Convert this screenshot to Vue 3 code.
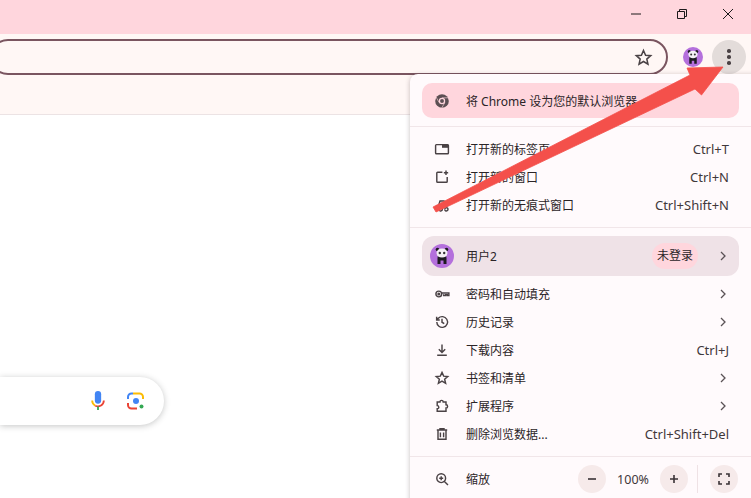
<script setup>
const topRows = [
  { id: 'tab', label: '打开新的标签页', key: 'Ctrl+T' },
  { id: 'win', label: '打开新的窗口', key: 'Ctrl+N' },
  { id: 'inc', label: '打开新的无痕式窗口', key: 'Ctrl+Shift+N' },
]

const lowerRows = [
  { id: 'pass', label: '密码和自动填充', more: true },
  { id: 'hist', label: '历史记录', more: true },
  { id: 'down', label: '下载内容', key: 'Ctrl+J' },
  { id: 'star', label: '书签和清单', more: true },
  { id: 'ext', label: '扩展程序', more: true },
  { id: 'del', label: '删除浏览数据...', key: 'Ctrl+Shift+Del' },
]
</script>

<template>
  <div class="page">
    <div class="titlebar">
      <svg class="win-btn" viewBox="0 0 12 12"><path d="M1 6h10" /></svg>
      <svg class="win-btn" viewBox="0 0 12 12"><path d="M1.5 3.5h7v7h-7zM3.5 3.5v-2h7v7h-2" /></svg>
      <svg class="win-btn" viewBox="0 0 12 12"><path d="M1 1l10 10M11 1L1 11" /></svg>
    </div>

    <div class="toolbar">
      <div class="omnibox">
        <svg class="star" viewBox="0 0 20 20"><path d="M10 2.6l2.2 5 5.4.5-4.1 3.6 1.2 5.3L10 14.2 5.3 17l1.2-5.3-4.1-3.6 5.4-.5z" /></svg>
      </div>
      <svg class="avatar small" viewBox="0 0 24 24">
        <circle cx="12" cy="12" r="12" fill="#b470dc" />
        <circle cx="7.500" cy="5.500" r="1.800" fill="#1d1a20" />
        <circle cx="16.500" cy="5.500" r="1.800" fill="#1d1a20" />
        <path d="M7.500 20v-6a4.500 4.500 0 0 1 9 0v6h-3v-3.500h-3V20z" fill="#1d1a20" />
        <ellipse cx="12" cy="9" rx="5.500" ry="4.500" fill="#f4f1f4" />
        <circle cx="9.800" cy="9" r="1.200" fill="#333" />
        <circle cx="14.200" cy="9" r="1.200" fill="#333" />
      </svg>
      <div class="dots-btn">
        <i></i><i></i><i></i>
      </div>
    </div>

    <div class="bookmarks"></div>

    <div class="content">
      <div class="searchbox">
        <svg class="mic" viewBox="0 0 20 24">
          <rect x="6.500" y="1" width="7" height="14" rx="3.500" fill="#4285f4" />
          <path d="M3.500 11.500a6.500 6.500 0 0 0 3.500 5.700" fill="none" stroke="#fbbc04" stroke-width="2" />
          <path d="M7 17.200a6.500 6.500 0 0 0 9.500-5.700" fill="none" stroke="#ea4335" stroke-width="2" />
          <rect x="9" y="18" width="2" height="4" fill="#34a853" />
        </svg>
        <svg class="lens" viewBox="0 0 20 20">
          <path d="M2 8V6a3.500 3.500 0 0 1 3.500-3.500H7" fill="none" stroke="#4285f4" stroke-width="2" />
          <path d="M7 2.500h6.500A3.500 3.500 0 0 1 17 6v2" fill="none" stroke="#fbbc04" stroke-width="2" />
          <path d="M2 12v2a3.500 3.500 0 0 0 3.500 3.500H11" fill="none" stroke="#ea4335" stroke-width="2" />
          <circle cx="10" cy="10" r="3" fill="#4285f4" />
          <circle cx="15.500" cy="15.500" r="2" fill="#34a853" />
        </svg>
      </div>
    </div>

    <div class="menu">
      <div class="banner">
        <svg class="icon" viewBox="0 0 20 20">
          <circle cx="10" cy="10" r="8.500" fill="#5c4f53" />
          <circle cx="10" cy="10" r="4" fill="#ffd6dd" />
          <circle cx="10" cy="10" r="2.400" fill="#5c4f53" />
          <path d="M10 6h8M6.500 12l-4-7M13.500 12l-4 7" stroke="#ffd6dd" stroke-width=".8" fill="none" />
        </svg>
        <span class="label">将 Chrome 设为您的默认浏览器</span>
      </div>
      <div class="divider"></div>

      <div class="group">
        <div v-for="row in topRows" :key="row.id" class="row">
          <svg class="icon" viewBox="0 0 20 20">
            <g v-if="row.id === 'tab'">
              <rect x="2" y="4.500" width="16" height="11.500" rx="1" fill="none" stroke="#4a4245" stroke-width="1.800" />
              <rect x="10" y="4.500" width="8" height="4" fill="#4a4245" />
            </g>
            <path v-else-if="row.id === 'win'" d="M10.500 4H4.500a1 1 0 0 0-1 1v10.500a1 1 0 0 0 1 1h11a1 1 0 0 0 1-1V10M15 2v5.500M12.300 4.700h5.400" fill="none" stroke="#4a4245" stroke-width="1.800" />
            <path v-else d="M3 11h14M6 10l1.500-5h5L14 10M6.500 15.500a2 2 0 1 0 0-.1M13.500 15.500a2 2 0 1 0 0-.1" fill="none" stroke="#4a4245" stroke-width="1.800" />
          </svg>
          <span class="label">{{ row.label }}</span>
          <span class="shortcut">{{ row.key }}</span>
        </div>
      </div>
      <div class="divider"></div>

      <div class="profile">
        <svg class="avatar" viewBox="0 0 24 24">
          <circle cx="12" cy="12" r="12" fill="#b470dc" />
          <circle cx="7.500" cy="5.500" r="1.800" fill="#1d1a20" />
          <circle cx="16.500" cy="5.500" r="1.800" fill="#1d1a20" />
          <path d="M7.500 20v-6a4.500 4.500 0 0 1 9 0v6h-3v-3.500h-3V20z" fill="#1d1a20" />
          <ellipse cx="12" cy="9" rx="5.500" ry="4.500" fill="#f4f1f4" />
          <circle cx="9.800" cy="9" r="1.200" fill="#333" />
          <circle cx="14.200" cy="9" r="1.200" fill="#333" />
        </svg>
        <span class="label">用户2</span>
        <span class="badge">未登录</span>
        <svg class="chevron" viewBox="0 0 6 10"><path d="M1 1l4 4-4 4" /></svg>
      </div>

      <div class="group lower">
        <div v-for="row in lowerRows" :key="row.id" class="row">
          <svg class="icon" viewBox="0 0 20 20">
            <g v-if="row.id === 'pass'" fill="none" stroke="#4a4245" stroke-width="1.800">
              <circle cx="6" cy="10" r="3.600" />
              <circle cx="6" cy="10" r="1" />
              <path d="M9.600 8.800h9v3h-2v-1h-2v1h-2.500v-1.500" />
            </g>
            <path v-else-if="row.id === 'hist'" d="M3.500 10a6.700 6.700 0 1 0 1.900-4.700L3.500 7.200M3.300 3.500v3.900h3.900M10 6v4.300l2.800 1.700" fill="none" stroke="#4a4245" stroke-width="1.800" />
            <path v-else-if="row.id === 'down'" d="M10 3v9.500M6 9l4 4 4-4M4 16.500h12" fill="none" stroke="#4a4245" stroke-width="1.800" />
            <path v-else-if="row.id === 'star'" d="M10 3l2.100 4.700 5.100.5-3.900 3.400 1.200 5L10 13.900l-4.500 2.700 1.200-5-3.900-3.400 5.100-.5z" fill="none" stroke="#4a4245" stroke-width="1.800" />
            <path v-else-if="row.id === 'ext'" d="M4 5h3.500a2 2 0 0 1 4 0H15v3.500a2 2 0 0 1 0 4V16.500H4v-3a2 2 0 0 0 0-4z" fill="none" stroke="#4a4245" stroke-width="1.800" />
            <path v-else d="M3.500 5h13M7.500 5V3.500h5V5M5 5v11.500h10V5M8 8v6M12 8v6" fill="none" stroke="#4a4245" stroke-width="1.800" />
          </svg>
          <span class="label">{{ row.label }}</span>
          <span v-if="row.key" class="shortcut">{{ row.key }}</span>
          <svg v-if="row.more" class="chevron" viewBox="0 0 6 10"><path d="M1 1l4 4-4 4" /></svg>
        </div>
      </div>
      <div class="divider"></div>

      <div class="zoom-row">
        <svg class="icon" viewBox="0 0 20 20">
          <path d="M9 3.500a5.500 5.500 0 1 0 0 11 5.500 5.500 0 0 0 0-11ZM13 13l4.500 4.500M6.500 9h5M9 6.500v5" fill="none" stroke="#4a4245" stroke-width="1.800" />
        </svg>
        <span class="label">缩放</span>
        <div class="round"><svg viewBox="0 0 12 12"><path d="M2 6h8" /></svg></div>
        <span class="percent">100%</span>
        <div class="round"><svg viewBox="0 0 12 12"><path d="M2 6h8M6 2v8" /></svg></div>
        <div class="sep"></div>
        <div class="round"><svg viewBox="0 0 12 12"><path d="M1 4V1h3M8 1h3v3M11 8v3H8M4 11H1V8" /></svg></div>
      </div>
    </div>

    <svg class="arrow" viewBox="0 0 751 498">
      <path d="M433 207L690 75 687 68 723 67 701.500 95 695 89 436 212z" fill="#f4504b" stroke="#f4504b" stroke-width=".8" stroke-linejoin="round" />
    </svg>
  </div>
</template>

<style>
body {
  margin: 0;
  background: #fff;
}
</style>

<style scoped>
.page {
  position: relative;
  width: 751px;
  height: 498px;
  overflow: hidden;
  display: flex;
  flex-direction: column;
  font-family: "Noto Sans", "Noto Sans CJK SC", sans-serif;
  font-size: 12px;
  color: #2b2427;
}

.titlebar {
  height: 34px;
  background: #ffd6dd;
  display: flex;
  justify-content: flex-end;
  align-items: center;
  padding-right: 17px;
  gap: 34px;
  padding-bottom: 6px;
  box-sizing: border-box;
}

.win-btn {
  width: 12px;
  height: 12px;
  fill: none;
  stroke: #1c1a1b;
  stroke-width: 1;
}

.toolbar {
  height: 41px;
  background: #fff7f5;
  display: flex;
  align-items: center;
  padding-top: 5px;
  box-sizing: border-box;
}

.omnibox {
  flex: none;
  width: 678px;
  margin-left: -10px;
  height: 36px;
  box-sizing: border-box;
  border: 2px solid #7a5560;
  border-radius: 18px;
  background: #fff7f5;
  display: flex;
  align-items: center;
  justify-content: flex-end;
  padding-right: 13px;
}

.star {
  width: 19px;
  height: 19px;
  fill: none;
  stroke: #4a4245;
  stroke-width: 1.600;
}

.avatar {
  width: 24px;
  height: 24px;
  flex: none;
}

.avatar.small {
  width: 20px;
  height: 20px;
  margin-left: 15px;
}

.dots-btn {
  width: 34px;
  height: 34px;
  border-radius: 50%;
  background: #e3dcda;
  margin-left: 9px;
  flex: none;
  display: flex;
  flex-direction: column;
  align-items: center;
  justify-content: center;
  gap: 2.500px;
}

.dots-btn i {
  width: 3.500px;
  height: 3.500px;
  border-radius: 50%;
  background: #4a4245;
}

.bookmarks {
  height: 39px;
  background: #fff7f5;
  border-bottom: 1px solid #ece3e4;
}

.content {
  flex: 1;
  background: #fff;
  padding-top: 262px;
}

.searchbox {
  width: 164px;
  height: 48px;
  background: #fff;
  border-radius: 0 24px 24px 0;
  box-shadow: 0 1px 6px rgba(32, 33, 36, 0.26);
  display: flex;
  align-items: center;
  justify-content: flex-end;
  padding-right: 18px;
  gap: 19px;
  box-sizing: border-box;
}

.mic {
  width: 18px;
  height: 22px;
}

.lens {
  width: 20px;
  height: 20px;
}

.menu {
  position: absolute;
  left: 410px;
  top: 74px;
  width: 345px;
  height: 440px;
  background: #fffafc;
  border-radius: 8px 0 0 0;
  box-shadow: 0 1px 5px rgba(60, 40, 45, 0.3);
  padding-top: 9px;
  box-sizing: border-box;
}

.banner {
  margin: 0 16px 0 12px;
  height: 35px;
  background: #ffd6dd;
  border-radius: 10px;
  display: flex;
  align-items: center;
  padding-left: 12px;
}

.divider {
  height: 1px;
  background: #f1e6e9;
  margin: 8px 0;
}

.icon {
  width: 16px;
  height: 16px;
  flex: none;
  margin-right: 16px;
}

.label {
  color: #2b2427;
}

.group {
  width: 341px;
}

.group.lower {
  margin-top: 4px;
}

.row {
  height: 28px;
  display: flex;
  align-items: center;
  padding: 0 22px 0 24px;
  box-sizing: border-box;
}

.shortcut {
  margin-left: auto;
  color: #3f383b;
  font-size: 13px;
}

.chevron {
  margin-left: auto;
  margin-right: 3px;
  width: 6px;
  height: 10px;
  fill: none;
  stroke: #5a5256;
  stroke-width: 1.300;
}

.profile {
  margin: 0 16px 0 12px;
  height: 40px;
  background: #efe2e7;
  border-radius: 12px;
  display: flex;
  align-items: center;
  padding: 0 13px 0 8px;
}

.profile .avatar {
  margin-right: 12px;
}

.badge {
  margin-left: auto;
  background: #ffd6dd;
  border-radius: 14px;
  height: 26px;
  line-height: 26px;
  padding: 0 5px;
  margin-right: 22px;
}

.profile .chevron {
  margin-left: 0;
  margin-right: 0;
}

.zoom-row {
  display: flex;
  align-items: center;
  width: 341px;
  height: 28px;
  padding-left: 24px;
  box-sizing: border-box;
}

.round {
  width: 28px;
  height: 28px;
  border-radius: 50%;
  background: #f6eaea;
  flex: none;
  display: flex;
  align-items: center;
  justify-content: center;
}

.round svg {
  width: 12px;
  height: 12px;
  fill: none;
  stroke: #3a3336;
  stroke-width: 1.600;
}

.zoom-row .label + .round {
  margin-left: auto;
}

.percent {
  width: 54px;
  text-align: center;
  color: #3f383b;
  font-size: 12.500px;
}

.sep {
  width: 1px;
  height: 28px;
  background: #efe2e5;
  margin: 0 12px 0 9px;
}

.zoom-row .round:last-child {
  margin-right: 13px;
}

.arrow {
  position: absolute;
  left: 0;
  top: 0;
  width: 751px;
  height: 498px;
  pointer-events: none;
}
</style>
